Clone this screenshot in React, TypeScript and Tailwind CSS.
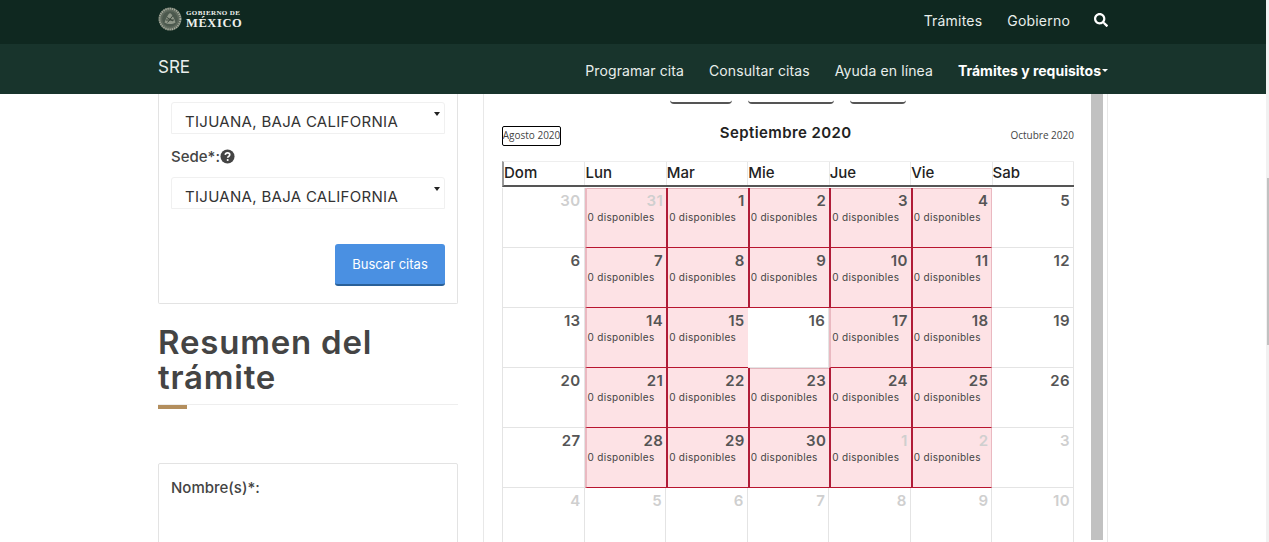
import { FaSearch } from 'react-icons/fa';
import clsx from 'clsx';

type Day = { n: number; muted?: boolean; pink?: boolean };

const heading = ['Dom', 'Lun', 'Mar', 'Mie', 'Jue', 'Vie', 'Sab'];

const weeks: Day[][] = [
  [{ n: 30, muted: true }, { n: 31, muted: true, pink: true }, { n: 1, pink: true }, { n: 2, pink: true }, { n: 3, pink: true }, { n: 4, pink: true }, { n: 5 }],
  [{ n: 6 }, { n: 7, pink: true }, { n: 8, pink: true }, { n: 9, pink: true }, { n: 10, pink: true }, { n: 11, pink: true }, { n: 12 }],
  [{ n: 13 }, { n: 14, pink: true }, { n: 15, pink: true }, { n: 16 }, { n: 17, pink: true }, { n: 18, pink: true }, { n: 19 }],
  [{ n: 20 }, { n: 21, pink: true }, { n: 22, pink: true }, { n: 23, pink: true }, { n: 24, pink: true }, { n: 25, pink: true }, { n: 26 }],
  [{ n: 27 }, { n: 28, pink: true }, { n: 29, pink: true }, { n: 30, pink: true }, { n: 1, muted: true, pink: true }, { n: 2, muted: true, pink: true }, { n: 3, muted: true }],
  [{ n: 4, muted: true }, { n: 5, muted: true }, { n: 6, muted: true }, { n: 7, muted: true }, { n: 8, muted: true }, { n: 9, muted: true }, { n: 10, muted: true }],
];

function Logo() {
  return (
    <div className="-mt-[6px] flex items-center gap-[4px]">
      <svg width="24" height="24" viewBox="0 0 24 24">
        <circle cx="12" cy="12" r="11.5" fill="#5f6a5e" />
        <circle cx="12" cy="12" r="10.4" fill="none" stroke="#a8ad9f" strokeWidth="1.8" strokeDasharray="1.2 1" />
        <circle cx="12" cy="12" r="7.8" fill="#4c594e" />
        <path d="M6.500 15.500c2-4.500 3-8 5.500-9.500 2.500 1.500 4 5 5.500 9.500-3.500 2-7.500 2-11 0z" fill="#8f9789" />
        <path d="M9 10.500l6 3.500M9.500 15.500l5.500-7M8 13h8" stroke="#39453b" strokeWidth="1" />
      </svg>
      <div className="flex flex-col font-['Liberation_Serif',serif] font-bold text-[#eef0ec]">
        <span className="text-[7px] leading-[8px] tracking-[0.4px]">GOBIERNO DE</span>
        <span className="text-[12.5px] leading-[12px] tracking-[0.6px]">MÉXICO</span>
      </div>
    </div>
  );
}

function FakeSelect() {
  return (
    <div className="relative h-[32px] w-[274px] overflow-hidden rounded-t-[3px] border border-[#f0f0f0] pl-[13px] pt-[9px] text-[15px] leading-[20px] tracking-[0.3px] text-[#333]">
      TIJUANA, BAJA CALIFORNIA
      <span className="absolute right-[4px] top-[9px] h-0 w-0 border-x-[3px] border-t-[4px] border-x-transparent border-t-[#222]" />
    </div>
  );
}

function Cell({ day, index }: { day: Day; index: number }) {
  const week = Math.floor(index / 7);
  const col = index % 7;
  const prev = weeks[week][col - 1];
  const paleLeft = !prev || !prev.pink;
  const paleTop = week === 0 || day.n === 23;
  const lastPink = col === 5;

  return (
    <div
      className={clsx(
        'h-[60px] pl-[2px] pr-[3px]',
        !day.pink && 'border-b border-r border-[#e4e4e4]',
        day.pink && 'border-b border-l-2 border-b-[#b8152f] bg-[#fde2e5]',
        day.pink && paleLeft && 'border-l-[#eab9c1]',
        day.pink && !paleLeft && 'border-l-[#b01c38]',
        day.pink && lastPink && 'border-r border-r-[#eab9c1]',
        day.pink && paleTop && 'shadow-[inset_0_1px_0_#e3b3bb]',
      )}
    >
      <div
        className={clsx(
          'pt-[3px] text-right text-[15px] font-semibold leading-[20px] tracking-[0.4px]',
          day.muted ? 'text-[#cfcfcf]' : 'text-[#555]',
        )}
      >
        {day.n}
      </div>
      {day.pink && <div className="-ml-[1px] text-[10px] leading-[12px] tracking-[0.3px] text-[#444]">0 disponibles</div>}
    </div>
  );
}

export default function App() {
  return (
    <div className="flex h-[542px] w-full overflow-hidden bg-white font-['Inter',sans-serif] text-[#333]">
      <div className="flex min-w-0 flex-1 flex-col">
        {/* top bar */}
        <header className="flex h-[44px] shrink-0 items-center justify-between bg-[#0f2820] pl-[158px] pr-[158px]">
          <Logo />
          <div className="-mt-[4px] flex items-center text-[14px] tracking-[0.2px] text-[#e8eeeb]">
            <span>Trámites</span>
            <span className="ml-[25px]">Gobierno</span>
            <FaSearch className="ml-[24px] h-[14px] w-[14px] text-white" />
          </div>
        </header>

        {/* sub nav */}
        <nav className="flex h-[50px] shrink-0 items-center justify-between bg-[#18342c] pl-[158px] pr-[158px] text-[#e8eeeb]">
          <span className="-mt-[3px] text-[17px]">SRE</span>
          <div className="mt-[3px] flex items-center gap-[25px] text-[14px] tracking-[0.1px]">
            <span>Programar cita</span>
            <span>Consultar citas</span>
            <span>Ayuda en línea</span>
            <span className="flex items-center gap-[1px] font-bold tracking-normal text-white">
              Trámites y requisitos
              <span className="h-0 w-0 border-x-[3.5px] border-t-[3.5px] border-x-transparent border-t-white" />
            </span>
          </div>
        </nav>

        {/* body */}
        <main className="flex min-h-0 flex-1 gap-[25px] pl-[158px]">
          <section className="w-[300px] shrink-0">
            <div className="h-[210px] rounded-b-[2px] border-x border-b border-[#e3e3e3] px-[12px] pt-[8px]">
              <FakeSelect />
              <div className="mt-[13px] flex h-[20px] items-center text-[15px] font-medium text-[#444]">
                Sede*:
                <svg width="15" height="15" viewBox="0 0 16 16" className="-mt-[2px]">
                  <circle cx="8" cy="8" r="7.5" fill="#444" />
                  <path d="M5.600 6.200C5.800 4.800 6.800 4.200 8 4.200c1.400 0 2.400.8 2.400 2 0 1.800-2.200 1.800-2.200 3.200" fill="none" stroke="#fff" strokeWidth="1.800" />
                  <circle cx="8.200" cy="11.800" r="1.100" fill="#fff" />
                </svg>
              </div>
              <div className="mt-[10px]">
                <FakeSelect />
              </div>
              <div className="mt-[35px] flex justify-end">
                <button className="h-[42px] w-[110px] rounded-[3px] border-b-2 border-[#2a6098] bg-[#4a90e2] pt-[2px] text-[13px] text-white">
                  Buscar citas
                </button>
              </div>
            </div>
            <h2 className="mt-[21px] text-[33px] font-semibold leading-[35px] tracking-[0.8px] text-[#444]">Resumen del trámite</h2>
            <div className="relative mt-[9px] h-[1px] bg-[#eeeeee]">
              <div className="absolute left-0 top-[1px] h-[4px] w-[29px] bg-[#b38e5d]" />
            </div>
            <div className="mt-[58px] h-[120px] rounded-t-[2px] border border-[#e3e3e3] px-[12px] pt-[14px] text-[15px] font-medium leading-[20px] text-[#444]">
              Nombre(s)*:
            </div>
          </section>

          <section className="flex w-[625px] shrink-0 border-x border-[#e8e8e8]">
            <div className="w-[607px] pl-[18px] pr-[17px]">
              <div className="flex h-[10px] pl-[168px]">
                <div className="mt-[5px] h-[5px] w-[62px] rounded-b-[4px] border-b-2 border-[#555]" />
                <div className="ml-[16px] mt-[5px] h-[5px] w-[86px] rounded-b-[4px] border-b-2 border-[#555]" />
                <div className="ml-[16px] mt-[5px] h-[5px] w-[56px] rounded-b-[4px] border-b-2 border-[#555]" />
              </div>
              <div className="mt-[22px] flex h-[19px] items-center justify-between">
                <span className="flex h-[20px] w-[59px] items-center justify-center whitespace-nowrap rounded-[2px] border border-black font-['Open_Sans',sans-serif] text-[10px] text-[#444]">
                  Agosto 2020
                </span>
                <span className="-mt-[4px] text-[15px] font-semibold tracking-[0.4px] text-[#222]">Septiembre 2020</span>
                <span className="font-['Open_Sans',sans-serif] text-[10px] text-[#444]">Octubre 2020</span>
              </div>
              <div className="mt-[16px] w-[572px]">
                <div className="grid grid-cols-7 border-b-2 border-l-2 border-t border-b-[#555] border-l-[#999] border-t-[#eeeeee]">
                  {heading.map((h) => (
                    <div key={h} className="h-[23px] border-r border-[#e8e8e8] text-[15px] font-medium leading-[22px] text-[#222]">
                      {h}
                    </div>
                  ))}
                </div>
                <div className="mt-[1px] grid grid-cols-7 border-l border-[#e4e4e4]">
                  {weeks.flat().map((d, i) => (
                    <Cell key={i} day={d} index={i} />
                  ))}
                </div>
              </div>
            </div>
            <div className="h-[446px] w-[12px] bg-[#c1c1c1]" />
          </section>
        </main>
      </div>

      {/* page scrollbar */}
      <div className="w-[3px] shrink-0 bg-[#f1f1f1] pl-[1px] pt-[178px]">
        <div className="h-[167px] w-[2px] bg-[#c1c1c1]" />
      </div>
    </div>
  );
}
